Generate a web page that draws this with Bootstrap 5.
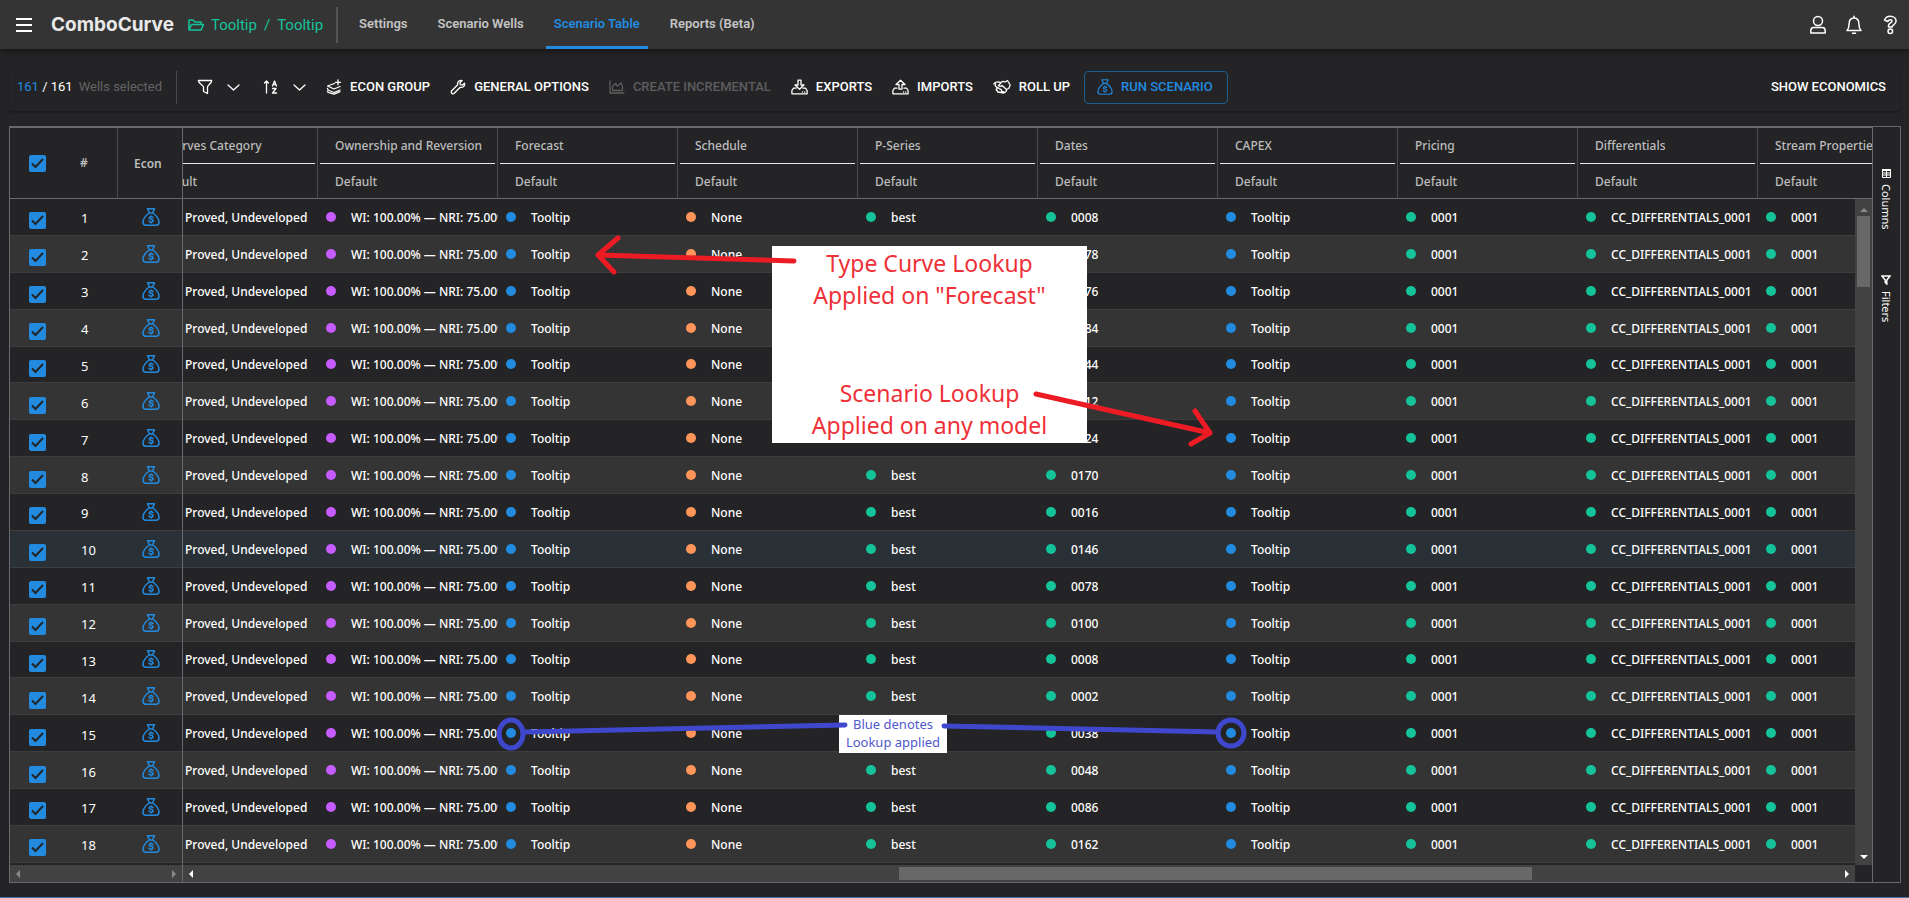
<!DOCTYPE html>
<html lang="en">
<head>
<meta charset="utf-8">
<meta name="viewport" content="width=device-width, initial-scale=1">
<title>ComboCurve - Scenario Table</title>
<link href="https://cdn.jsdelivr.net/npm/bootstrap@5.3.0/dist/css/bootstrap.min.css" rel="stylesheet">
<style>
:root{--ink:#242426;--bar:#343434;--line:#68686e;--col-line:#4c4c50;--blue:#228be0;--green:#15c39a;--seg:"Noto Sans","Open Sans",sans-serif;--rob:Roboto,"Liberation Sans",sans-serif}
body{background:var(--ink);color:#fff;font-family:var(--rob);font-size:13px;line-height:20px;border-bottom:1px solid #4a6ea8;overflow:hidden}
svg{display:block;flex:none}
.ico{fill:none;stroke:currentColor;stroke-width:1.5;stroke-linecap:round;stroke-linejoin:round}

/* top navigation */
.topbar{background:var(--bar);height:49px;padding:0 9px 0 16px;box-shadow:0 2px 6px rgba(0,0,0,.45)}
.brandname{font:700 19px/24px Inter,sans-serif;color:#e9e9e9;margin-left:19px}
.crumbs{color:var(--green);font-size:15px;margin-left:14px;gap:7px}
.crumbs a{color:inherit;text-decoration:none}
.vr-nav{width:2px;height:36px;background:#555;margin:0 13px}
.tabs{gap:14px}
.tabs .nav-link{font-weight:600;color:#c4c4c4;padding:14px 8px 12px;border-bottom:3px solid transparent;line-height:20px;border-radius:0}
.tabs .nav-link.active{color:var(--blue);border-bottom-color:var(--blue);background:none}
.iconbtn{background:none;border:0;padding:0;color:#fff}

/* toolbar */
.toolbar{margin:14px 9px 0;padding:8px 14px 8px 8px;height:48px;border-radius:4px;box-shadow:0 2px 2px rgba(0,0,0,.25)}
.toolbar .ico{stroke-width:1.3}
.toolbtn{background:none;border:0;padding:0;color:#fff;font-weight:500;gap:8px;display:flex;align-items:center;white-space:nowrap}
.toolbtn:disabled{color:#5d5d5f}
.runbtn{border:1px solid #1d5d92;border-radius:4px;color:var(--blue);padding:0 14px 0 12px;height:33px;margin-left:-6px}
.vr-tool{width:1px;height:33px;background:#4a4a4c;margin:0 20px 0 14px}
.counter{gap:6px}
.counter a{color:var(--blue)}
.counter .hint{color:#636365}
.chev{margin-left:14px}
.tb-sort{margin-left:23px}
.tools{margin-left:20px;gap:20px}

/* grid */
.gridbox{margin:15px 8px 14px 9px;border:1px solid var(--line);font-family:var(--seg);min-height:0}
.pane{border-top:1px solid var(--line);min-height:0;min-width:0}
.pinned{width:173px;flex:none;border-right:1px solid var(--line)}
.scrollpane{overflow:hidden;padding-bottom:2px}
.gt{table-layout:fixed;border-collapse:separate;border-spacing:0;height:100%;color:#fff;font-size:12px;line-height:18px;font-weight:500}
.pinned .gt{width:172px}
.main .gt{width:1800px}
.gt th,.gt td{padding:0;white-space:nowrap;overflow:hidden;vertical-align:middle}
.gt thead th{font-weight:600;font-size:12px;color:#bdbdbd;border-right:1px solid var(--col-line);padding-left:17px}
.gt thead .top th{height:36px}
.gt thead .sub th{height:35px;border-bottom:1px solid var(--line);padding-top:2px}
.main .gt thead th{font-weight:500}
.main .top th{background:linear-gradient(#e8e8e8,#e8e8e8) 2px 100%/calc(100% - 4px) 1px no-repeat}
.pinned thead th{height:71px;border-bottom:1px solid var(--line)}
.gt tbody td{border-bottom:1px solid #3d3d3d}
.main .gt tbody td{padding-top:2px}
.gt tbody tr:nth-child(even){background:#343434}
.gt tbody tr.hovered{background:#293036}
.gt .first{padding-left:47px}
.gt .pk{padding-left:19px;border-right:0}
.gt thead .pk + th{padding-left:16px}
.gt thead .econ{padding:2px 0 0 16px;border-right:0}
.gt tbody .pk{padding-top:8px}
.gt tbody .num{padding:3px 0 0 17px;font-size:13px;font-weight:400}
.gt tbody .econ{padding-left:24px;color:var(--blue)}
.dot{display:inline-block;width:10px;height:10px;border-radius:50%;margin:0 15px 0 8px}
.pick{width:17px;height:17px;margin:0;border:0;border-radius:2px;display:block}
.gt .pick{border-radius:2px}
.pick:checked{background-color:var(--blue);background-image:url("data:image/svg+xml,%3Csvg xmlns='http://www.w3.org/2000/svg' viewBox='0 0 17 17'%3E%3Cpath d='M3 8.500l3.500 3.500 7.500-8' fill='none' stroke='%23242426' stroke-width='2'/%3E%3C/svg%3E");background-size:17px}
.hbar{height:17px;background:#424242;padding:2px 5px}
.hbar .thumb{height:13px;background:#686868;width:38.4%;margin-left:42.7%}
.main .hbar{margin-right:17px}
.vbar{position:absolute;right:0;top:71px;bottom:17px;width:17px;background:#424242;padding:9px 2px 5px}
.vbar .thumb{width:13px;height:71px;background:#686868;margin-top:3px}
.side{width:28px;flex:none;border-left:1px solid var(--line);padding-top:42px;font-size:11px}
.side button{writing-mode:vertical-rl;background:none;border:0;color:#fff;padding:0;margin-left:3px;line-height:20px;display:flex;align-items:center;gap:6px}
.side .filt{margin-top:45px}

/* callouts drawn over the grid */
.notes{position:absolute;inset:0;pointer-events:none}
.notebox{position:absolute;background:#fff;text-align:center}
.note-red{left:762px;top:119px;width:315px;height:197px;padding-top:1px;color:#ee3038;font-size:23px;line-height:32px}
.note-red .second{margin-top:66px}
.note-blue{left:829px;top:588px;width:108px;height:38px;color:#4f57cc;font-size:13px;line-height:18px}
</style>
</head>
<body class="vh-100 d-flex flex-column">
<svg width="0" height="0" class="position-absolute" aria-hidden="true">
<symbol id="bag" viewBox="0 0 18 18"><path d="M5.500.8h7l-2 4.200h-3zM7.200 5C4.500 7 1 10.500 1 14.200c0 2 1.200 3 3 3h10c1.800 0 3-1 3-3C17 10.500 13.500 7 10.800 5zM11 9.600c-.5-.6-1.200-.8-2-.8-1.100 0-1.800.5-1.800 1.200C7.200 11.700 11 10.800 11 12.700c0 .8-.8 1.300-2 1.300-.9 0-1.600-.3-2-.9M9 7.900v.9M9 14v.9"/></symbol>
</svg>

<nav class="topbar d-flex align-items-center">
  <button class="iconbtn" aria-label="Menu"><svg width="16" height="16" stroke="#fff" stroke-width="2"><path d="M0 2h16M0 8h16M0 14h16"/></svg></button>
  <span class="brandname">ComboCurve</span>
  <div class="crumbs d-flex align-items-center">
    <svg class="ico" width="16" height="16" viewBox="0 0 16 16"><path d="M1 13V3h4l2 2h6v2.500M1 13l2.500-5.500h12L13 13z"/></svg>
    <a href="#">Tooltip</a><span>/</span><a href="#">Tooltip</a>
  </div>
  <span class="vr-nav"></span>
  <div class="tabs nav">
    <a class="nav-link" href="#">Settings</a>
    <a class="nav-link" href="#">Scenario Wells</a>
    <a class="nav-link active" href="#">Scenario Table</a>
    <a class="nav-link" href="#">Reports (Beta)</a>
  </div>
  <div class="ms-auto d-flex align-items-center gap-3">
    <button class="iconbtn" aria-label="Account"><svg class="ico" width="20" height="20" viewBox="0 0 20 20"><circle cx="10" cy="6" r="4.500"/><path d="M5.500 12.500h9c1.500 0 2.700 1.500 2.700 3.500v2H2.800v-2c0-2 1.200-3.500 2.700-3.500z"/></svg></button>
    <button class="iconbtn" aria-label="Notifications"><svg class="ico" width="20" height="20" viewBox="0 0 20 20"><path d="M10 1.200v1.500M3 15.500c1.500-1.500 2-3 2-6 0-4 2-6.500 5-6.500s5 2.500 5 6.500c0 3 .5 4.500 2 6zM8.500 18.300h3"/></svg></button>
    <button class="iconbtn" aria-label="Help"><svg class="ico" width="20" height="20" viewBox="0 0 20 20"><path d="M4.500 5C5.500 2.500 7.500 1.200 10.200 1.200c3.300 0 5.900 2 5.900 4.900 0 3.600-3.900 3.900-3.900 5.400v.5H8.500v-1.500c0-2.500 3.500-2.800 3.500-4.300 0-.9-.8-1.400-1.800-1.400-1.200 0-1.700.7-2.400 1.700z"/><circle cx="10.300" cy="16.300" r="2.300"/></svg></button>
  </div>
</nav>

<div class="toolbar d-flex align-items-center">
  <div class="counter d-flex"><span><a href="#" class="text-decoration-none">161</a> / 161</span><span class="hint">Wells selected</span></div>
  <span class="vr-tool"></span>
  <button class="toolbtn" aria-label="Filter"><svg class="ico" width="16" height="16" viewBox="0 0 16 16"><path d="M1.300 1.500h13.400c0 3-4.200 4.500-4.200 6.500v6.500l-4-2V8c0-2-5.200-3.500-5.200-6.500z"/></svg></button>
  <button class="toolbtn chev" aria-label="Filter menu"><svg class="ico" width="13" height="16" viewBox="0 0 13 16"><path d="M1 6l5.500 5L12 6"/></svg></button>
  <button class="toolbtn tb-sort" aria-label="Sort"><svg class="ico" width="16" height="16" viewBox="0 0 16 16"><path d="M3.500 14V2M1.500 4l2-2 2 2M9.500 7L11.500 2l2 5M10.200 5.500h2.600M9.500 9.500H13L9.500 14h4"/></svg></button>
  <button class="toolbtn chev" aria-label="Sort menu"><svg class="ico" width="13" height="16" viewBox="0 0 13 16"><path d="M1 6l5.500 5L12 6"/></svg></button>
  <div class="tools d-flex align-items-center">
    <button class="toolbtn"><svg class="ico" width="16" height="16" viewBox="0 0 16 16"><path d="M8.500 4.500L1.500 7 8 10l6-2.500M1.500 9.500c0 1 .5 1.500 1.500 2L8 13.500l6-2.500M1.500 12.200c0 .6.500 1.100 1.500 1.500l5 1.500 6-2.500M12 .8v5M9.500 3.300h5"/></svg>ECON GROUP</button>
    <button class="toolbtn"><svg class="ico" width="16" height="16" viewBox="0 0 16 16"><path d="M14.500 4.200l-2.300 2-1.900-.5-.4-1.900 2.200-2.300C9.500.7 7 2.500 7.700 5.800L1.500 12c-1 1.500 1 3.500 2.500 2.500l6.200-6.200c3.300.6 5-1.800 4.300-4.100z"/></svg>GENERAL OPTIONS</button>
    <button class="toolbtn" disabled><svg class="ico" width="16" height="16" viewBox="0 0 16 16"><path d="M1 2v12h14M3.500 11.500V7.500l3-3 2 2.500 3.500-3 1.500 3.500v4z"/></svg>CREATE INCREMENTAL</button>
    <button class="toolbtn"><svg class="ico" width="17" height="16" viewBox="0 0 17 16"><path d="M7 1.200h3V6h3L8.500 10.200 4 6h3zM5 9.200H2.500L.9 11.500v3.300h15.200v-3.300L14.500 9.200H12M11.500 13h.1M13.700 13h.1"/></svg>EXPORTS</button>
    <button class="toolbtn"><svg class="ico" width="17" height="16" viewBox="0 0 17 16"><path d="M7 10.200h3V5.500h3L8.500 1.200 4 5.500h3zM5 9.200H2.500L.9 11.500v3.300h15.200v-3.300L14.500 9.200H12M11.500 13h.1M13.700 13h.1"/></svg>IMPORTS</button>
    <button class="toolbtn"><svg class="ico" width="18" height="16" viewBox="0 0 18 16"><path d="M.8 5c1-2 4-2.700 7-1.500l2.200-1.200 2 .7 2.500-1.500 2.700 4.500-1.500 3.500-1.700.5M2.500 5l-.3 1.700L4 8.500M8 3.800L5.500 6.500c1 1 2.500 1 3.500 0l4.800 4.300-.8 1.700-2 1.500-6-1L3.200 10.500l1.600-2 1.700 1.300 1.500.5.800 2 2 .5"/></svg>ROLL UP</button>
    <button class="toolbtn runbtn"><svg class="ico" width="16" height="16" viewBox="0 0 18 18"><use href="#bag"/></svg>RUN SCENARIO</button>
  </div>
  <button class="toolbtn ms-auto">SHOW ECONOMICS</button>
</div>

<main class="gridbox d-flex flex-grow-1 position-relative">
  <div class="pinned pane d-flex flex-column">
    <div class="scrollpane flex-grow-1">
      <table class="gt">
        <colgroup><col style="width:54px"><col style="width:54px"><col></colgroup>
        <thead><tr><th class="pk"><input type="checkbox" class="form-check-input pick" checked aria-label="Select all wells"></th><th>#</th><th class="econ">Econ</th></tr></thead>
        <tbody id="pinnedRows"></tbody>
      </table>
    </div>
    <div class="hbar d-flex align-items-center justify-content-between">
      <svg width="5" height="8" fill="#8a8a8a"><path d="M5 0v8L1 4z"/></svg>
      <svg width="5" height="8" fill="#8a8a8a"><path d="M0 0v8l4-4z"/></svg>
    </div>
  </div>
  <div class="main pane d-flex flex-column flex-grow-1 position-relative">
    <div class="scrollpane flex-grow-1" id="centre">
      <table class="gt">
        <thead><tr class="top" id="groups"></tr><tr class="sub" id="subs"></tr></thead>
        <tbody id="rows"></tbody>
      </table>
    </div>
    <div class="hbar d-flex align-items-center">
      <svg width="6" height="8" fill="#fff"><path d="M5 0v8L1 4z"/></svg>
      <div class="flex-grow-1"><div class="thumb"></div></div>
      <svg width="6" height="8" fill="#fff"><path d="M1 0v8l4-4z"/></svg>
    </div>
    <div class="vbar d-flex flex-column align-items-center">
      <svg width="8" height="5" fill="#8a8a8a"><path d="M0 4h8L4 0z"/></svg>
      <div class="thumb"></div>
      <svg class="mt-auto" width="8" height="5" fill="#fff"><path d="M0 0h8L4 4z"/></svg>
    </div>
  </div>
  <aside class="side">
    <button><svg width="9" height="9" fill="none" stroke="#fff"><path d="M.5 1v7.500h8V1M0 .5h9M0 1.500h9M4.500 2v6M.5 4h8M.5 6h8"/></svg>Columns</button>
    <button class="filt"><svg width="10" height="10" fill="none" stroke="#fff" stroke-width="1.500"><path d="M1 1h8L5.800 5v4L4.200 7.500V5z"/></svg>Filters</button>
  </aside>

  <div class="notes">
    <div class="notebox note-red"><div>Type Curve Lookup</div><div>Applied on "Forecast"</div><div class="second">Scenario Lookup</div><div>Applied on any model</div></div>
    <div class="notebox note-blue"><div>Blue denotes</div><div>Lookup applied</div></div>
    <svg class="position-absolute top-0 start-0 w-100 h-100" fill="none" stroke-width="5" stroke-linecap="round" stroke-linejoin="round">
      <g stroke="#ed1c24"><path d="M784 134L588 128M608 111l-20 17 16 17"/><path d="M1026 267l174 39M1185 284l15 22-19 11"/></g>
      <g stroke="#3f48cc"><ellipse cx="501" cy="607" rx="12" ry="14"/><ellipse cx="1221" cy="606" rx="13" ry="13"/><path d="M515 605l320-7M934 599l274 6"/></g>
    </svg>
  </div>
</main>
<script src="https://cdn.jsdelivr.net/npm/bootstrap@5.3.0/dist/js/bootstrap.bundle.min.js"></script>
<script>
const groups = ['Reserves Category','Ownership and Reversion','Forecast','Schedule','P-Series','Dates','CAPEX','Pricing','Differentials','Stream Properties'];
const dates = ['0008','0078','0076','0084','0044','0012','0024','0170','0016','0146','0078','0100','0008','0002','0038','0048','0086','0162'];
const green = '#15c39a', blue = '#228be0';
document.getElementById('groups').innerHTML = groups.map(g => `<th>${g}</th>`).join('');
document.getElementById('subs').innerHTML = groups.map(() => '<th>Default</th>').join('');
const cell = (color, text) => `<td><span class="dot" style="background:${color}"></span>${text}</td>`;
document.getElementById('rows').innerHTML = dates.map((d, i) => `<tr class="${i === 9 ? 'hovered' : ''}"><td class="first">Proved, Undeveloped</td>` +
  cell('#c65cff', 'WI: 100.00% — NRI: 75.00%') + cell(blue, 'Tooltip') + cell('#ff9559', 'None') + cell(green, 'best') + cell(green, d) +
  cell(blue, 'Tooltip') + cell(green, '0001') + cell(green, 'CC_DIFFERENTIALS_0001') + cell(green, '0001') + '</tr>').join('');
document.getElementById('pinnedRows').innerHTML = dates.map((d, i) => `<tr class="${i === 9 ? 'hovered' : ''}"><td class="pk"><input type="checkbox" class="form-check-input pick" checked aria-label="Select well ${i + 1}"></td><td class="num">${i + 1}</td>` +
  '<td class="econ"><svg class="ico" width="18" height="18"><use href="#bag"/></svg></td></tr>').join('');
document.getElementById('centre').scrollLeft = 45;
</script>
</body>
</html>
